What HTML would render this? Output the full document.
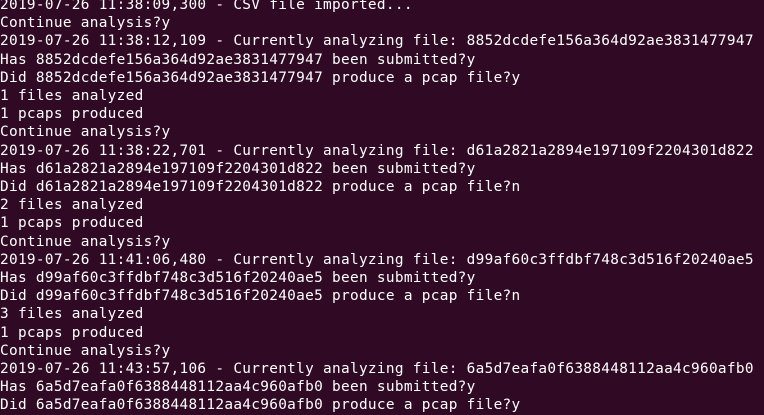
<!DOCTYPE html>
<html><head><meta charset="utf-8"><style>
html,body{margin:0;padding:0;background:#300a24;width:764px;height:411px;overflow:hidden}
pre{margin:0;position:absolute;left:0;top:-4px;font-family:"DejaVu Sans Mono","Liberation Mono",monospace;font-size:14.4px;letter-spacing:0.31px;line-height:18.2px;color:#ffffff;white-space:pre}
</style></head><body><pre>2019-07-26 11:38:09,300 - CSV file imported...
Continue analysis?y
2019-07-26 11:38:12,109 - Currently analyzing file: 8852dcdefe156a364d92ae3831477947
Has 8852dcdefe156a364d92ae3831477947 been submitted?y
Did 8852dcdefe156a364d92ae3831477947 produce a pcap file?y
1 files analyzed
1 pcaps produced
Continue analysis?y
2019-07-26 11:38:22,701 - Currently analyzing file: d61a2821a2894e197109f2204301d822
Has d61a2821a2894e197109f2204301d822 been submitted?y
Did d61a2821a2894e197109f2204301d822 produce a pcap file?n
2 files analyzed
1 pcaps produced
Continue analysis?y
2019-07-26 11:41:06,480 - Currently analyzing file: d99af60c3ffdbf748c3d516f20240ae5
Has d99af60c3ffdbf748c3d516f20240ae5 been submitted?y
Did d99af60c3ffdbf748c3d516f20240ae5 produce a pcap file?n
3 files analyzed
1 pcaps produced
Continue analysis?y
2019-07-26 11:43:57,106 - Currently analyzing file: 6a5d7eafa0f6388448112aa4c960afb0
Has 6a5d7eafa0f6388448112aa4c960afb0 been submitted?y
Did 6a5d7eafa0f6388448112aa4c960afb0 produce a pcap file?y</pre></body></html>
